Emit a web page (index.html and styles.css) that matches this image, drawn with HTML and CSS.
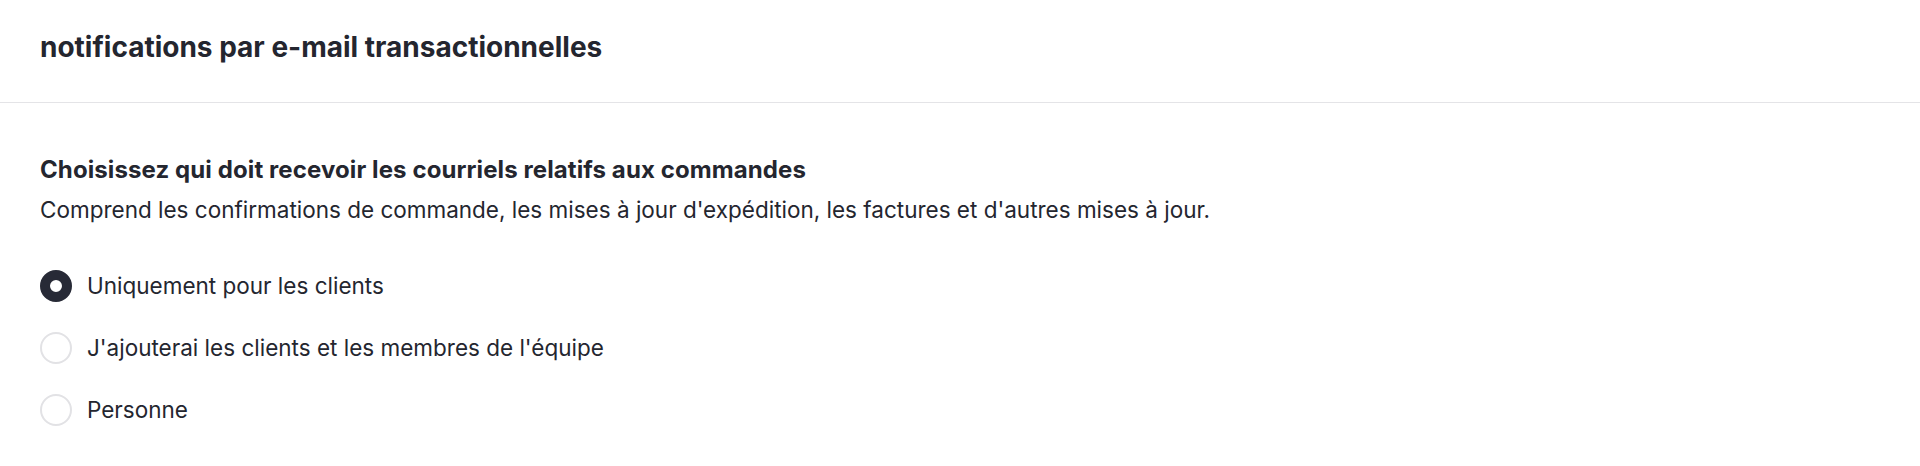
FILE: index.html
```html
<!DOCTYPE html>
<html lang="fr">
<head>
    <meta charset="UTF-8">
    <meta name="viewport" content="width=device-width, initial-scale=1.0">
    <title>Notifications par e-mail</title>
    <link rel="stylesheet" href="styles.css">
</head>
<body>
    <div class="panel">
        <!-- Header -->
        <div class="panel-header">
            <h1>notifications par e-mail transactionnelles</h1>
        </div>

        <!-- Recipients choice -->
        <div class="panel-body">
            <h2>Choisissez qui doit recevoir les courriels relatifs aux commandes</h2>
            <p class="hint">Comprend les confirmations de commande, les mises à jour d'expédition, les factures et d'autres mises à jour.</p>

            <div class="options">
                <label class="option">
                    <input type="radio" name="recipients" checked>
                    <span class="radio"></span>
                    <span>Uniquement pour les clients</span>
                </label>
                <label class="option">
                    <input type="radio" name="recipients">
                    <span class="radio"></span>
                    <span>J'ajouterai les clients et les membres de l'équipe</span>
                </label>
                <label class="option">
                    <input type="radio" name="recipients">
                    <span class="radio"></span>
                    <span>Personne</span>
                </label>
            </div>
        </div>
    </div>
</body>
</html>
```

FILE: styles.css
```css
body {
    font-family: 'Inter', 'Noto Sans', sans-serif;
    margin: 0;
    padding: 0;
    background-color: #fff;
    color: #24262f;
}
.panel-header {
    height: 103px;
    padding: 0 40px 8px;
    display: flex;
    align-items: center;
    border-bottom: 1px solid #e4e4e7;
    box-sizing: border-box;
}
.panel-header h1 {
    margin: 0;
    font-size: 28px;
    font-weight: 700;
}
.panel-body {
    padding: 49px 40px 0;
}
.panel-body h2 {
    margin: 0;
    font-size: 24px;
    font-weight: 700;
    line-height: 36px;
    letter-spacing: 0.1px;
}
.hint {
    margin: 6px 0 0;
    font-size: 22.5px;
    line-height: 32px;
}
.options {
    display: flex;
    flex-direction: column;
    gap: 30px;
    margin-top: 44px;
}
.option {
    display: flex;
    align-items: center;
    gap: 15px;
    font-size: 22.5px;
    line-height: 32px;
    cursor: pointer;
}
.option input {
    display: none;
}
.radio {
    width: 32px;
    height: 32px;
    box-sizing: border-box;
    border-radius: 50%;
    border: 2px solid #e2e2e5;
    background-color: #fff;
}
.option input:checked + .radio {
    border: 10px solid #272a36;
    background-color: #fff;
}
```
